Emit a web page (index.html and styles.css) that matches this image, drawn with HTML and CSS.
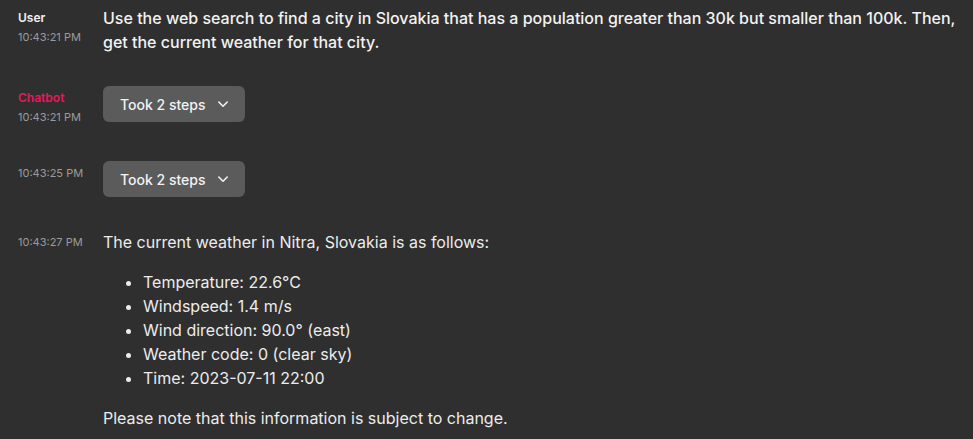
FILE: index.html
```html
<!DOCTYPE html>
<html lang="en">
<head>
<meta charset="utf-8">
<link rel="stylesheet" href="styles.css">
</head>
<body>
<div class="chat">
  <div class="row">
    <div class="meta">
      <div class="name user">User</div>
      <div class="time">10:43:21 PM</div>
    </div>
    <div class="content user-text">Use the web search to find a city in Slovakia that has a population greater than 30k but smaller than 100k. Then, get the current weather for that city.</div>
  </div>
  <div class="row">
    <div class="meta">
      <div class="name bot">Chatbot</div>
      <div class="time">10:43:21 PM</div>
    </div>
    <div class="content">
      <button class="steps">Took 2 steps <svg class="chev" width="16" height="16" viewBox="0 0 16 16"><path d="M3.8 6 8 10.2 12.2 6" fill="none" stroke="currentColor" stroke-width="1.6" stroke-linecap="round" stroke-linejoin="round"/></svg></button>
    </div>
  </div>
  <div class="row">
    <div class="meta">
      <div class="time">10:43:25 PM</div>
    </div>
    <div class="content">
      <button class="steps">Took 2 steps <svg class="chev" width="16" height="16" viewBox="0 0 16 16"><path d="M3.8 6 8 10.2 12.2 6" fill="none" stroke="currentColor" stroke-width="1.6" stroke-linecap="round" stroke-linejoin="round"/></svg></button>
    </div>
  </div>
  <div class="row last">
    <div class="meta">
      <div class="time">10:43:27 PM</div>
    </div>
    <div class="content bot-text">
      <p>The current weather in Nitra, Slovakia is as follows:</p>
      <ul>
        <li>Temperature: 22.6°C</li>
        <li>Windspeed: 1.4 m/s</li>
        <li>Wind direction: 90.0° (east)</li>
        <li>Weather code: 0 (clear sky)</li>
        <li>Time: 2023-07-11 22:00</li>
      </ul>
      <p>Please note that this information is subject to change.</p>
    </div>
  </div>
</div>
</body>
</html>
```
FILE: styles.css
```css
html, body {
  margin: 0;
  padding: 0;
  background: #2f2f2f;
}
body {
  font-family: Inter, "Noto Sans", sans-serif;
  color: #ececec;
}
.chat {
  display: flex;
  flex-direction: column;
  gap: 32px;
  padding: 6px 12px 16px 18px;
}
.row {
  display: grid;
  grid-template-columns: 85px 1fr;
  align-items: start;
}
.row.last {
  margin-top: 1px;
}
.meta {
  display: flex;
  flex-direction: column;
  gap: 3px;
  padding: 4px 0;
}
.name {
  font-size: 12px;
  line-height: 16px;
  font-weight: 600;
}
.name.user { color: #f2f2f2; }
.name.bot { color: #e8175d; }
.time {
  font-size: 11px;
  line-height: 16px;
  color: #9b9b9b;
}
.content {
  font-size: 16px;
  line-height: 24px;
}
.user-text {
  font-weight: 500;
  color: #f2f2f2;
}
.bot-text p {
  margin: 0;
}
.bot-text ul {
  margin: 16px 0;
  padding-left: 40px;
}
.steps {
  display: inline-flex;
  align-items: center;
  gap: 10px;
  height: 36px;
  padding: 0 14px 0 17px;
  border: none;
  border-radius: 6px;
  background: #5b5b5b;
  color: #f2f2f2;
  font-family: Inter, "Noto Sans", sans-serif;
  font-size: 14px;
  font-weight: 500;
}
.chev { display: block; }
```
